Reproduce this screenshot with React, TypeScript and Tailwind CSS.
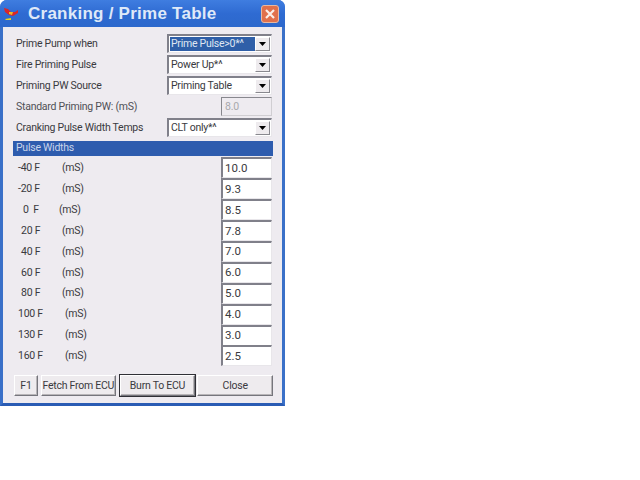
const fieldRows = [
  { label: "Prime Pump when", value: "Prime Pulse>0*^", selected: true },
  { label: "Fire Priming Pulse", value: "Power Up*^" },
  { label: "Priming PW Source", value: "Priming Table" },
  { label: "Standard Priming PW: (mS)", value: "8.0", disabled: true },
  { label: "Cranking Pulse Width Temps", value: "CLT only*^" },
];

const pulseRows = [
  { temp: "-40 F", col: "w-[49px] pl-[5px]", value: "10.0" },
  { temp: "-20 F", col: "w-[49px] pl-[5px]", value: "9.3" },
  { temp: "0  F", col: "w-[46px] pl-[10px]", value: "8.5" },
  { temp: "20 F", col: "w-[49px] pl-[8px]", value: "7.8" },
  { temp: "40 F", col: "w-[49px] pl-[8px]", value: "7.0" },
  { temp: "60 F", col: "w-[49px] pl-[8px]", value: "6.0" },
  { temp: "80 F", col: "w-[49px] pl-[8px]", value: "5.0" },
  { temp: "100 F", col: "w-[52px] pl-[5px]", value: "4.0" },
  { temp: "130 F", col: "w-[52px] pl-[5px]", value: "3.0" },
  { temp: "160 F", col: "w-[52px] pl-[5px]", value: "2.5" },
];

const sunken = "border-t-2 border-l-2 border-t-[#80808a] border-l-[#80808a] border-b border-r border-b-[#e8e6ea] border-r-[#e8e6ea]";

const Raised = ({ className, children }: { className: string; children: string }) => (
  <div
    className={`h-[21px] whitespace-nowrap flex items-center justify-center bg-[#eeebee] border border-t-white border-l-white border-r-[#75757c] border-b-[#75757c] shadow-[inset_-1px_-1px_0_#b8b5b8] ${className}`}
  >
    {children}
  </div>
);

const App = () => {
  return (
    <div className="w-[640px] h-[480px] bg-white overflow-hidden text-[10.5px] tracking-[-0.25px] text-[#3a3a40] [font-family:Roboto,'Liberation_Sans',sans-serif]">
      <div className="w-[285px] h-[406px] flex flex-col rounded-t-[7px] bg-[#2f68c8] border-x-[3px] border-b-[3px] border-x-[#3a70c8] border-b-[#2a5cb4]">
        <div className="h-[27px] shrink-0 flex items-center -mx-[3px] pl-[3px] pr-[6px] rounded-t-[7px] bg-gradient-to-b from-[#3f7de0] via-[#2f6bd2] to-[#2c68cc]">
          <svg width="20" height="20" viewBox="0 0 20 20" className="shrink-0">
            <path d="M1 4 L5 5 L8 8 L12 8 L15 6 L15 9 L10 12 L6 11 L2 8 Z" fill="#d8262a" />
            <path d="M6 8 L10 8 L9 11 L6 10 Z" fill="#f0b828" />
            <path d="M2 15 L8 14 L8 16 L3 16 Z" fill="#e8d020" />
          </svg>
          <span className="ml-[5px] text-[17px] tracking-[0.25px] font-bold text-[#dfe9f8] [font-family:'Liberation_Sans',sans-serif]">
            Cranking / Prime Table
          </span>
          <div className="ml-auto w-[18px] h-[18px] rounded-[3px] border border-[#e8b8a0] bg-[#e0704c] flex items-center justify-center">
            <svg width="12" height="12" viewBox="0 0 12 12">
              <path d="M2 2 L10 10 M10 2 L2 10" stroke="#fbeee8" strokeWidth="2.2" />
            </svg>
          </div>
        </div>

        <div className="flex-1 flex flex-col bg-[#eeebf0] pt-[7px] pl-[10px] pr-[9px]">
          <div className="flex flex-col gap-[2px]">
            {fieldRows.map((row) => (
              <div key={row.label} className="h-[19px] flex items-center">
                <span className={`pl-[3px] ${row.disabled ? "text-[#505056]" : ""}`}>{row.label}</span>
                {row.disabled ? (
                  <div className="ml-auto mr-[1px] w-[51px] h-[19px] pl-[3px] flex items-center text-[#a8a8ac] border border-t-[#88888e] border-l-[#88888e] border-b-[#d0ced2] border-r-[#d0ced2]">
                    {row.value}
                  </div>
                ) : (
                  <div className={`ml-auto mr-[1px] w-[105px] h-[19px] flex items-center bg-white p-[1px] ${sunken}`}>
                    <span className={`flex-1 h-full flex items-center pl-[1px] whitespace-nowrap ${row.selected ? "bg-[#2f5fa8] text-[#dfe6f2]" : ""}`}>
                      {row.value}
                    </span>
                    <span className="w-[15px] h-full shrink-0 flex items-center justify-center bg-[#eeebee] border border-t-white border-l-white border-r-[#88888e] border-b-[#88888e]">
                      <svg width="7" height="4" viewBox="0 0 7 4">
                        <path d="M0 0 H7 L3.5 4 Z" fill="#000" />
                      </svg>
                    </span>
                  </div>
                )}
              </div>
            ))}
          </div>

          <div className="mt-[4px] h-[15px] flex items-center pl-[3px] pb-[1px] bg-[#2e5cae] text-[#c8d4ea]">Pulse Widths</div>

          <div className="mt-[2px] flex flex-col gap-[1px]">
            {pulseRows.map((row) => (
              <div key={row.temp} className="h-[19.9px] flex items-center">
                <span className={`${row.col} shrink-0 whitespace-pre`}>{row.temp}</span>
                <span>(mS)</span>
                <div className={`ml-auto mr-[1px] w-[51px] h-[21px] shrink-0 flex items-center pl-[2px] bg-white text-[11.5px] tracking-normal ${sunken}`}>
                  {row.value}
                </div>
              </div>
            ))}
          </div>

          <div className="mt-[9px] flex gap-[4px] pl-[1px]">
            <Raised className="w-[24px]">F1</Raised>
            <Raised className="w-[75px] -ml-[1px]">Fetch From ECU</Raised>
            <Raised className="w-[76px] outline outline-1 outline-[#303036]">Burn To ECU</Raised>
            <Raised className="w-[76px] -ml-[2px]">Close</Raised>
          </div>
        </div>
      </div>
    </div>
  );
};

export default App;
